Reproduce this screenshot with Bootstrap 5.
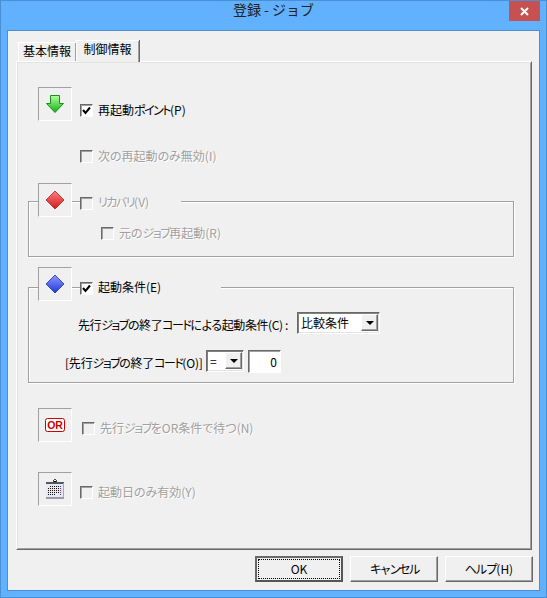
<!DOCTYPE html>
<html lang="ja">
<head>
    <meta charset="UTF-8">
    <meta name="viewport" content="width=device-width, initial-scale=1">
    <title>登録 - ジョブ</title>
    <link rel="stylesheet" href="https://cdn.jsdelivr.net/npm/bootstrap@5.3.0/dist/css/bootstrap.min.css">
    <style>
        html, body { height: 598px; overflow: hidden; }
        body { font: 12px/14px "Noto Sans CJK JP", "Liberation Sans", sans-serif; font-feature-settings: "palt"; color: #000; background: #61b1ff; }

        .win-frame { width: 547px; height: 598px; border: 1px solid #4a90d4; background: #61b1ff; }
        .win-title { height: 29px; position: relative; font-size: 14px; color: #222; padding-top: 1px; font-feature-settings: normal; }
        .win-close { position: absolute; top: 0; right: 6px; width: 31px; height: 20px; padding: 0; border: 0; border-radius: 0; background: #c75050; }
        .win-client { margin: 0 6px 0 6px; height: 561px; border: 1px solid #4a90d4; background: #f0f0f0; padding: 9px 7px 0 8px; }

        .win-tabs { height: 21px; padding-left: 2px; border: 0; flex-wrap: nowrap; align-items: flex-end; }
        .win-tabs .nav-link { color: #000; font-size: 12px; line-height: 14px; background: #f0f0f0; border-radius: 0; margin: 0; padding: 2px 0 0; text-align: center; border: 0; font-feature-settings: normal; }
        .win-tabs .tab-off { width: 58px; height: 19px; box-shadow: inset 1px 1px #fff, inset -1px 0 #a0a0a0; }
        .win-tabs .nav-link.active { width: 63px; height: 22px; margin-bottom: -1px; position: relative; z-index: 1; background: #f0f0f0; color: #000; box-shadow: inset 1px 1px #fff, inset -1px 0 #a0a0a0, 1px 0 #696969; }

        .win-panel { height: 489px; border: 1px solid; border-color: #fff #696969 #696969 #fff; box-shadow: inset 1px 1px #e3e3e3, inset -1px -1px #a0a0a0; padding: 25px 0 0 21px; }

        /* katakana is narrower in the original font */
        .kana-tight { letter-spacing: -1.5px; }

        .pic-box { width: 34px; height: 34px; flex: none; background: #f0f0f0; border: 1px solid; border-color: #a0a0a0 #fff #fff #a0a0a0; }
        .opt-line { display: flex; align-items: center; height: 13px; }
        .opt-line .form-check-input { flex: none; width: 13px; height: 13px; margin: 0 5px 0 0; border-radius: 0; border: 1px solid; border-color: #696969 #fff #fff #696969; box-shadow: inset 1px 1px #a0a0a0; background: #fff; float: none; opacity: 1; }
        .opt-line .form-check-input:checked { background: #fff url("data:image/svg+xml,%3Csvg xmlns='http://www.w3.org/2000/svg' width='11' height='11'%3E%3Cpath d='M2 5l2.500 3L9 2.500' fill='none' stroke='%23000' stroke-width='2'/%3E%3C/svg%3E") center no-repeat; }
        .opt-line .form-check-input:disabled { background: #f0f0f0; }
        .opt-line label { opacity: 1; white-space: nowrap; margin-top: -2px; }
        .opt-line.is-off label { color: #a0a0a0; text-shadow: 1px 1px #fff; }

        .pic-row { display: flex; align-items: flex-end; gap: 8px; }
        .pic-row .opt-line { margin-bottom: 4px; }
        .row-restart { margin-left: 42px; margin-top: 29px; }

        .grp-box { width: 486px; margin-left: -10px; border: 1px solid #a0a0a0; box-shadow: 1px 1px #fff, inset 1px 1px #fff; padding-left: 9px; }
        .grp-recover { height: 56px; margin-top: 38px; }
        .grp-start { height: 96px; margin-top: 30px; }
        .grp-head { margin-top: -19px; }
        .grp-recover .grp-head .opt-line { margin-bottom: 7px; }
        .grp-start .grp-head { margin-top: -21px; }
        .grp-start .grp-head .opt-line { margin-bottom: 6px; }
        .opt-line .head-label { background: #f0f0f0; height: 15px; line-height: 14px; margin-left: -5px; padding-left: 5px; }
        .head-recover { width: 88px; }
        .head-start { width: 128px; }
        .row-orig { margin: 10px 0 0 63px; }

        .cond-row { display: flex; height: 22px; }
        .cond-row-a { margin: 11px 0 0 40px; }
        .cond-row-a .cond-label { width: 219px; letter-spacing: -.4px; }
        .cond-row-b { margin: 16px 0 0 27px; }
        .cond-row-b .cond-label { width: 141px; letter-spacing: -.2px; }
        .cond-label { white-space: nowrap; padding-top: 6px; }
        .cond-label .kana-tight { letter-spacing: -1.5px; }

        .drop-box { display: flex; height: 22px; background: #fff; border: 1px solid; border-color: #696969 #fff #fff #696969; box-shadow: inset 1px 1px #808080, inset -1px -1px #e3e3e3; padding: 1px 1px 2px 2px; }
        .drop-text { flex: 1; padding-left: 1px; line-height: 17px; font-size: 12px; }
        .drop-btn { width: 17px; background: #f0f0f0; border: 1px solid; border-color: #fff #696969 #696969 #fff; box-shadow: inset -1px -1px #a0a0a0; display: flex; align-items: center; justify-content: center; }
        .drop-btn i { width: 0; height: 0; border: 4px solid transparent; border-top-color: #000; border-bottom: 0; }
        .drop-wide { width: 83px; }
        .drop-eq { width: 38px; }
        .num-box { width: 33px; height: 23px; margin-left: 4px; text-align: right; padding: 2px 3px; line-height: 17px; font-size: 12px; border-radius: 0; border: 1px solid; border-color: #696969 #fff #fff #696969; box-shadow: inset 1px 1px #a0a0a0; background: #fff; color: #000; }

        .row-or { margin-top: 25px; gap: 10px; }
        .row-cal { margin-top: 30px; }
        .row-or .opt-line, .row-cal .opt-line { margin-bottom: 7px; }

        .foot-btns { margin: 6px -1px 0 0; gap: 7px; }
        .win-btn { width: 88px; height: 26px; padding: 0; border-radius: 0; font-size: 12px; line-height: 14px; color: #000; background: #f0f0f0; border: 1px solid; border-color: #fff #696969 #696969 #fff; box-shadow: inset -1px -1px #a0a0a0; }
        .win-btn:hover { background: #f0f0f0; color: #000; border-color: #fff #696969 #696969 #fff; }
        .win-btn-main { position: relative; border: 2px solid; border-color: #696969 #555 #555 #696969; box-shadow: none; }
        .win-btn-main::after { content: ""; position: absolute; inset: 1px; border: 1px dotted #000; }
        .btn-cancel { letter-spacing: -2.300px; }
    </style>
</head>
<body>
    <div class="win-frame">
        <div class="win-title text-center">
            登録 - ジョブ
            <button type="button" class="btn win-close d-flex align-items-center justify-content-center" aria-label="閉じる">
                <svg width="9" height="9" viewBox="0 0 9 9"><path d="M1 1l7 7M8 1L1 8" stroke="#fff" stroke-width="2"/></svg>
            </button>
        </div>

        <div class="win-client">
            <ul class="nav nav-tabs win-tabs">
                <li class="nav-item"><a class="nav-link tab-off" href="#">基本情報</a></li>
                <li class="nav-item"><a class="nav-link active" href="#">制御情報</a></li>
            </ul>

            <div class="win-panel">
                <!-- 再起動ポイント -->
                <div class="pic-row">
                    <div class="pic-box d-flex align-items-center justify-content-center">
                        <svg width="20" height="20" viewBox="0 0 20 20">
                            <defs><linearGradient id="gGreen" x1="0" y1="0" x2="0" y2="1"><stop offset="0" stop-color="#b0ffa0"/><stop offset="1" stop-color="#10b010"/></linearGradient></defs>
                            <path d="M5.500 1.500h9v8h4l-8.500 9-8.500-9h4z" fill="url(#gGreen)" stroke="#1c8c1c"/>
                        </svg>
                    </div>
                    <div class="opt-line">
                        <input class="form-check-input" type="checkbox" id="chkRestart" checked>
                        <label for="chkRestart">再起動<span class="kana-tight">ポイント</span>(P)</label>
                    </div>
                </div>
                <div class="opt-line is-off row-restart">
                    <input class="form-check-input" type="checkbox" id="chkNext" disabled>
                    <label for="chkNext">次の再起動のみ無効(I)</label>
                </div>

                <!-- リカバリ -->
                <div class="grp-box grp-recover">
                    <div class="pic-row grp-head">
                        <div class="pic-box d-flex align-items-center justify-content-center">
                            <svg width="20" height="20" viewBox="0 0 20 20">
                                <defs><linearGradient id="gRed" x1="0" y1="0" x2="0" y2="1"><stop offset="0" stop-color="#ff8080"/><stop offset="1" stop-color="#d01818"/></linearGradient></defs>
                                <path d="M10 1l9 9-9 9-9-9z" fill="url(#gRed)" stroke="#b02020" stroke-width=".8"/>
                            </svg>
                        </div>
                        <div class="opt-line is-off">
                            <input class="form-check-input" type="checkbox" id="chkRecover" disabled>
                            <label class="head-label head-recover" for="chkRecover"><span class="kana-tight">リカバリ</span>(V)</label>
                        </div>
                    </div>
                    <div class="opt-line is-off row-orig">
                        <input class="form-check-input" type="checkbox" id="chkOrig" disabled>
                        <label for="chkOrig">元の<span class="kana-tight">ジョブ</span>再起動(R)</label>
                    </div>
                </div>

                <!-- 起動条件 -->
                <div class="grp-box grp-start">
                    <div class="pic-row grp-head">
                        <div class="pic-box d-flex align-items-center justify-content-center">
                            <svg width="20" height="20" viewBox="0 0 20 20">
                                <defs><linearGradient id="gBlue" x1="0" y1="0" x2="0" y2="1"><stop offset="0" stop-color="#9098ff"/><stop offset="1" stop-color="#2038d8"/></linearGradient></defs>
                                <path d="M10 1l9 9-9 9-9-9z" fill="url(#gBlue)" stroke="#2030b0" stroke-width=".8"/>
                            </svg>
                        </div>
                        <div class="opt-line">
                            <input class="form-check-input" type="checkbox" id="chkCond" checked>
                            <label class="head-label head-start" for="chkCond">起動条件(E)</label>
                        </div>
                    </div>
                    <div class="cond-row cond-row-a">
                        <span class="cond-label">先行<span class="kana-tight">ジョブ</span>の終了<span class="kana-tight">コード</span>による起動条件(C) :</span>
                        <div class="drop-box drop-wide">
                            <span class="drop-text">比較条件</span>
                            <span class="drop-btn"><i></i></span>
                        </div>
                    </div>
                    <div class="cond-row cond-row-b">
                        <span class="cond-label">[先行<span class="kana-tight">ジョブ</span>の終了<span class="kana-tight">コード</span>(O)]</span>
                        <div class="drop-box drop-eq">
                            <span class="drop-text">=</span>
                            <span class="drop-btn"><i></i></span>
                        </div>
                        <input class="form-control num-box" type="text" value="0">
                    </div>
                </div>

                <!-- OR条件 -->
                <div class="pic-row row-or">
                    <div class="pic-box d-flex align-items-center justify-content-center">
                        <svg width="20" height="16" viewBox="0 0 20 16">
                            <rect x=".5" y="1.500" width="19" height="13" rx="2" fill="#fff" stroke="#c80000"/>
                            <text x="10" y="12" text-anchor="middle" font-family="Liberation Sans, sans-serif" font-size="10.500" font-weight="700" fill="#c80000">OR</text>
                        </svg>
                    </div>
                    <div class="opt-line is-off">
                        <input class="form-check-input" type="checkbox" id="chkOr" disabled>
                        <label for="chkOr">先行<span class="kana-tight">ジョブ</span>をOR条件で待つ(N)</label>
                    </div>
                </div>

                <!-- 起動日 -->
                <div class="pic-row row-cal">
                    <div class="pic-box d-flex align-items-center justify-content-center">
                        <svg width="20" height="22" viewBox="0 0 20 22" shape-rendering="crispEdges">
                            <path d="M10 1l2 2H8z" fill="#fff" stroke="#000" stroke-width=".7"/>
                            <rect x="9" y="3" width="2" height="2" fill="#000"/>
                            <rect x="1" y="5" width="18" height="15" fill="#e8e8f0"/>
                            <rect x="1" y="4" width="18" height="2" fill="#505860"/>
                            <rect x="1" y="19" width="18" height="2" fill="#9a9aa8"/>
                            <rect x="18" y="5" width="1" height="15" fill="#a8a8b0"/>
                            <g fill="#111">
                                <rect x="5" y="8" width="1" height="1"/><rect x="7" y="8" width="1" height="1"/><rect x="9" y="8" width="1" height="1"/><rect x="11" y="8" width="1" height="1"/><rect x="13" y="8" width="1" height="1"/>
                                <rect x="3" y="10" width="1" height="1"/><rect x="5" y="10" width="1" height="1"/><rect x="7" y="10" width="1" height="1"/><rect x="9" y="10" width="1" height="1"/><rect x="11" y="10" width="1" height="1"/><rect x="13" y="10" width="1" height="1"/>
                                <rect x="3" y="12" width="1" height="1"/><rect x="5" y="12" width="1" height="1"/><rect x="7" y="12" width="1" height="1"/><rect x="9" y="12" width="1" height="1"/><rect x="11" y="12" width="1" height="1"/><rect x="13" y="12" width="1" height="1"/>
                                <rect x="3" y="14" width="1" height="1"/><rect x="5" y="14" width="1" height="1"/><rect x="7" y="14" width="1" height="1"/><rect x="9" y="14" width="1" height="1"/><rect x="11" y="14" width="1" height="1"/><rect x="13" y="14" width="1" height="1"/>
                                <rect x="3" y="16" width="1" height="1"/><rect x="5" y="16" width="1" height="1"/><rect x="7" y="16" width="1" height="1"/><rect x="9" y="16" width="1" height="1"/>
                            </g>
                            <g fill="#2040e0"><rect x="15" y="8" width="1" height="1"/><rect x="15" y="12" width="1" height="1"/><rect x="15" y="16" width="1" height="1"/></g>
                            <g fill="#e02020"><rect x="15" y="10" width="1" height="1"/><rect x="15" y="14" width="1" height="1"/></g>
                        </svg>
                    </div>
                    <div class="opt-line is-off">
                        <input class="form-check-input" type="checkbox" id="chkDay" disabled>
                        <label for="chkDay">起動日のみ有効(Y)</label>
                    </div>
                </div>
            </div>

            <div class="d-flex justify-content-end foot-btns">
                <button type="button" class="btn win-btn win-btn-main">OK</button>
                <button type="button" class="btn win-btn btn-cancel">キャンセル</button>
                <button type="button" class="btn win-btn"><span class="kana-tight">ヘルプ</span>(H)</button>
            </div>
        </div>
    </div>

    <script src="https://cdn.jsdelivr.net/npm/bootstrap@5.3.0/dist/js/bootstrap.bundle.min.js"></script>
</body>
</html>
